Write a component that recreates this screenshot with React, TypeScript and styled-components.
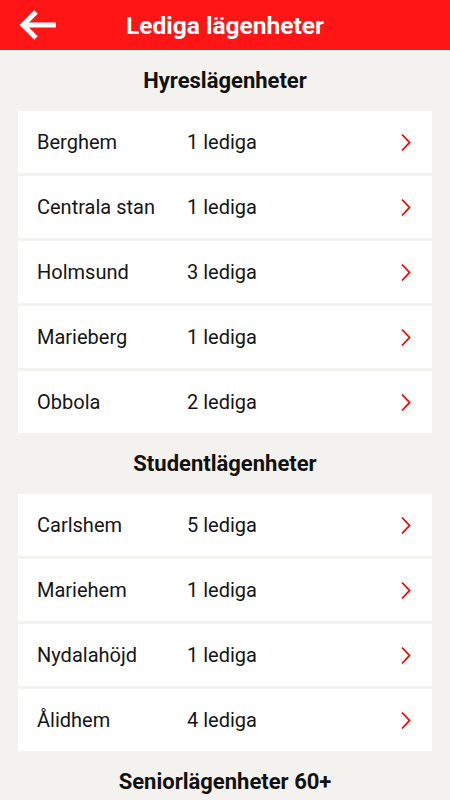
import React from 'react';
import styled, { createGlobalStyle } from 'styled-components';

const GlobalStyle = createGlobalStyle`
  html, body {
    margin: 0;
    padding: 0;
    background: #f3f2ee;
    font-family: Roboto, "Noto Sans", sans-serif;
  }
`;

const Screen = styled.div`
  width: 450px;
  height: 800px;
  overflow: hidden;
  background: #f3f2ee;
`;

const TopBar = styled.header`
  height: 50px;
  background: #ff1515;
  display: flex;
  align-items: center;
  justify-content: center;
  position: relative;
`;

const BackButton = styled.button`
  position: absolute;
  left: 16px;
  top: 7px;
  width: 44px;
  height: 36px;
  border: none;
  background: none;
  padding: 0;
  display: flex;
  align-items: center;
  justify-content: center;
  cursor: pointer;
`;

const TopTitle = styled.h1`
  margin: 0;
  color: #fff;
  font-size: 24.5px;
  font-weight: 700;
`;

const SectionTitle = styled.h2`
  margin: 0;
  height: 61px;
  line-height: 61px;
  text-align: center;
  font-size: 22px;
  font-weight: 700;
  color: #111;
`;

const Card = styled.ul`
  list-style: none;
  margin: 0 18px;
  padding: 0;
  display: flex;
  flex-direction: column;
  gap: 3px;
`;

const Row = styled.li`
  height: 62px;
  background: #fff;
  display: flex;
  align-items: center;
  padding: 0 20px 0 19px;
  font-size: 20px;
  color: #151515;
`;

const Area = styled.span`
  width: 150px;
`;

const Count = styled.span`
  flex: 1;
`;

const Chevron = () => (
  <svg width="12" height="19" viewBox="0 0 12 19">
    <path d="M2 1.5 L9.5 9.5 L2 17.5" fill="none" stroke="#ff0000" strokeWidth="1.8" />
  </svg>
);

const BackArrow = () => (
  <svg width="40" height="32" viewBox="0 0 40 32">
    <path d="M38 16 H5 M18 3 L5 16 L18 29" fill="none" stroke="#fff" strokeWidth="5" strokeLinejoin="miter" />
  </svg>
);

interface Section {
  title: string;
  items: { area: string; count: number }[];
}

const sections: Section[] = [
  {
    title: 'Hyreslägenheter',
    items: [
      { area: 'Berghem', count: 1 },
      { area: 'Centrala stan', count: 1 },
      { area: 'Holmsund', count: 3 },
      { area: 'Marieberg', count: 1 },
      { area: 'Obbola', count: 2 },
    ],
  },
  {
    title: 'Studentlägenheter',
    items: [
      { area: 'Carlshem', count: 5 },
      { area: 'Mariehem', count: 1 },
      { area: 'Nydalahöjd', count: 1 },
      { area: 'Ålidhem', count: 4 },
    ],
  },
  {
    title: 'Seniorlägenheter 60+',
    items: [],
  },
];

export default function App() {
  return (
    <Screen>
      <GlobalStyle />
      <TopBar>
        <BackButton aria-label="Tillbaka">
          <BackArrow />
        </BackButton>
        <TopTitle>Lediga lägenheter</TopTitle>
      </TopBar>
      {sections.map((section) => (
        <section key={section.title}>
          <SectionTitle>{section.title}</SectionTitle>
          {section.items.length > 0 && (
            <Card>
              {section.items.map((item) => (
                <Row key={item.area}>
                  <Area>{item.area}</Area>
                  <Count>{item.count} lediga</Count>
                  <Chevron />
                </Row>
              ))}
            </Card>
          )}
        </section>
      ))}
    </Screen>
  );
}
